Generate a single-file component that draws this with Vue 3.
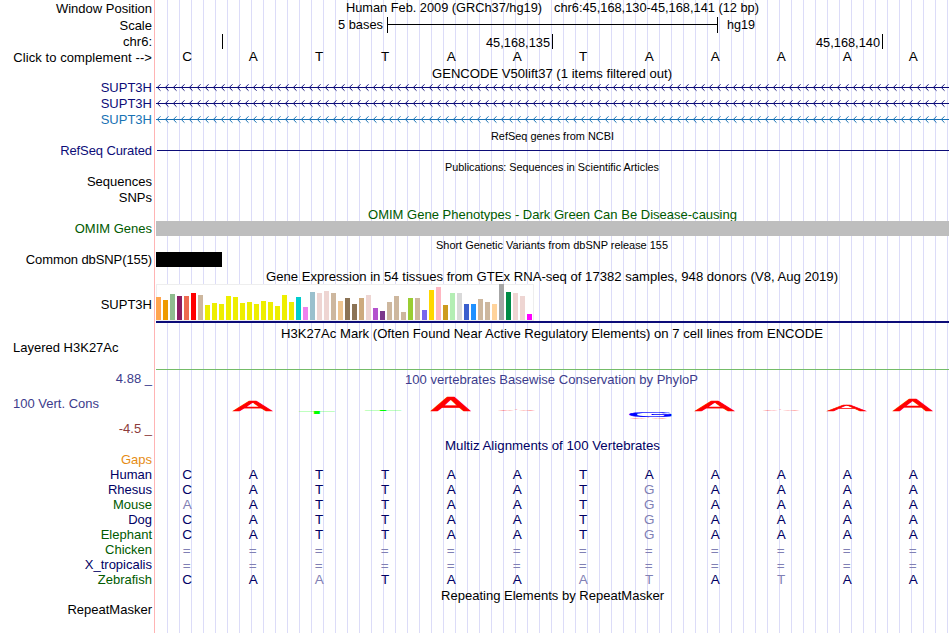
<template>
  <div class="browser">
    <div class="labels">
      <div v-for="g in labelGroups" :key="g.name" class="group" :class="g.name">
        <div v-for="l in g.items" :key="l.text" class="label" :class="l.cls">{{ l.text }}</div>
      </div>
    </div>

    <div class="tracks">
      <!-- position, scale and ruler -->
      <svg width="793" height="65" viewBox="156 0 793 65">
        <text x="346" y="12" textLength="196" lengthAdjust="spacingAndGlyphs">Human Feb. 2009 (GRCh37/hg19)</text>
        <text x="554" y="12" textLength="205" lengthAdjust="spacingAndGlyphs">chr6:45,168,130-45,168,141 (12 bp)</text>
        <text x="338" y="29" textLength="45" lengthAdjust="spacingAndGlyphs">5 bases</text>
        <path class="rule" d="M387.5 17V33M387 24.5H718M717.5 17V33" />
        <text x="727" y="29" textLength="28" lengthAdjust="spacingAndGlyphs">hg19</text>
        <path class="rule" d="M222.5 34V49M552.5 34V49M882.5 34V49" />
        <text x="486" y="47" textLength="64" lengthAdjust="spacingAndGlyphs">45,168,135</text>
        <text x="816" y="47" textLength="64" lengthAdjust="spacingAndGlyphs">45,168,140</text>
        <text v-for="(b, i) in 'CATTAATAAAAA'" :key="i" class="base" :x="colX(i)" y="61">{{ b }}</text>
      </svg>

      <!-- GENCODE -->
      <svg width="793" height="64" viewBox="156 0 793 64">
        <text x="432" y="13" textLength="240" lengthAdjust="spacingAndGlyphs">GENCODE V50lift37 (1 items filtered out)</text>
        <g v-for="(c, i) in ['#0c0c78', '#0c0c78', '#1872b4']" :key="i" :stroke="c" fill="none">
          <path :d="`M156 ${22.5 + i * 16}H949`" />
          <path :d="chevrons(22.5 + i * 16)" />
        </g>
      </svg>

      <!-- RefSeq and publications -->
      <svg width="793" height="78" viewBox="156 0 793 78">
        <text class="small" x="491" y="11" textLength="123" lengthAdjust="spacingAndGlyphs">RefSeq genes from NCBI</text>
        <path d="M157 21.5H949" stroke="#0c0c78" />
        <text class="small" x="445" y="42" textLength="214" lengthAdjust="spacingAndGlyphs">Publications: Sequences in Scientific Articles</text>
      </svg>

      <!-- OMIM and dbSNP -->
      <svg width="793" height="60" viewBox="156 0 793 60">
        <text class="green" x="368" y="12" textLength="369" lengthAdjust="spacingAndGlyphs">OMIM Gene Phenotypes - Dark Green Can Be Disease-causing</text>
        <rect x="156" y="14" width="793" height="15" fill="#bebebe" />
        <text class="small" x="436" y="42" textLength="232" lengthAdjust="spacingAndGlyphs">Short Genetic Variants from dbSNP release 155</text>
        <rect x="156" y="45" width="66" height="15" />
      </svg>

      <!-- GTEx expression -->
      <svg width="793" height="56" viewBox="156 0 793 56">
        <text x="266" y="14" textLength="572" lengthAdjust="spacingAndGlyphs">Gene Expression in 54 tissues from GTEx RNA-seq of 17382 samples, 948 donors (V8, Aug 2019)</text>
        <rect x="156.5" y="17.5" width="377" height="36" fill="#fff" stroke="#eee" />
        <rect v-for="(t, i) in tissues" :key="i" :x="156 + i * 7" :y="53 - t[1]" width="5" :height="t[1]" :fill="t[0]" />
        <rect x="156" y="54" width="793" height="2" fill="#0c0c78" />
      </svg>

      <!-- H3K27Ac -->
      <svg width="793" height="47" viewBox="156 0 793 47">
        <text x="281" y="15" textLength="542" lengthAdjust="spacingAndGlyphs">H3K27Ac Mark (Often Found Near Active Regulatory Elements) on 7 cell lines from ENCODE</text>
        <path d="M156 46.5H949" stroke="#74bc68" />
      </svg>

      <!-- PhyloP logo -->
      <svg width="793" height="68" viewBox="156 0 793 68">
        <text class="slate" x="405" y="14" textLength="293" lengthAdjust="spacingAndGlyphs">100 vertebrates Basewise Conservation by PhyloP</text>
        <text
          v-for="(l, i) in logo"
          :key="i"
          class="logo"
          :fill="l.color"
          :stroke="l.color"
          :stroke-width="l.h > 4 ? 3 : 0"
          :transform="`translate(${l.x} ${l.base}) scale(${l.w / l.em} ${l.h / 68.8})`"
        >{{ l.ch }}</text>
      </svg>

      <!-- Multiz alignment -->
      <svg width="793" height="149" viewBox="156 0 793 149">
        <text class="navy" x="445" y="12" textLength="215" lengthAdjust="spacingAndGlyphs">Multiz Alignments of 100 Vertebrates</text>
        <g v-for="(row, r) in alignment" :key="r">
          <text
            v-for="(b, i) in row"
            :key="i"
            class="base"
            :class="isMatch(b, i) ? 'navy' : 'faded'"
            :x="colX(i) - (b === '=' ? 0.5 : 0)"
            :y="(b === '=' ? 42 : 41) + r * 15"
          >{{ b }}</text>
        </g>
      </svg>

      <!-- RepeatMasker -->
      <svg width="793" height="46" viewBox="156 0 793 46">
        <text x="441" y="13" textLength="223" lengthAdjust="spacingAndGlyphs">Repeating Elements by RepeatMasker</text>
      </svg>
    </div>
  </div>
</template>

<script setup>
const labelGroups = [
  { name: 'position', items: [{ text: 'Window Position' }] },
  { name: 'ruler', items: [{ text: 'Scale' }, { text: 'chr6:' }, { text: 'Click to complement -->', cls: 'loose' }] },
  {
    name: 'gencode',
    items: [
      { text: 'SUPT3H', cls: 'gene' },
      { text: 'SUPT3H', cls: 'gene' },
      { text: 'SUPT3H', cls: 'noncoding' },
    ],
  },
  { name: 'refseq', items: [{ text: 'RefSeq Curated', cls: 'gene tight' }] },
  { name: 'pubs', items: [{ text: 'Sequences' }, { text: 'SNPs' }] },
  { name: 'omim', items: [{ text: 'OMIM Genes', cls: 'green' }] },
  { name: 'dbsnp', items: [{ text: 'Common dbSNP(155)', cls: 'tight' }] },
  { name: 'gtex', items: [{ text: 'SUPT3H' }] },
  { name: 'h3k', items: [{ text: 'Layered H3K27Ac', cls: 'left' }] },
  { name: 'max', items: [{ text: '4.88 _', cls: 'slate' }] },
  { name: 'cons', items: [{ text: '100 Vert. Cons', cls: 'left slate' }] },
  { name: 'min', items: [{ text: '-4.5 _', cls: 'maroon' }] },
  {
    name: 'species',
    items: [
      { text: 'Gaps', cls: 'orange' },
      { text: 'Human', cls: 'navy' },
      { text: 'Rhesus', cls: 'navy' },
      { text: 'Mouse', cls: 'green' },
      { text: 'Dog', cls: 'navy' },
      { text: 'Elephant', cls: 'green' },
      { text: 'Chicken', cls: 'green' },
      { text: 'X_tropicalis', cls: 'navy' },
      { text: 'Zebrafish', cls: 'green' },
    ],
  },
  { name: 'repeats', items: [{ text: 'RepeatMasker' }] },
]

// [colour, bar height]
const tissues = [
  ['#ffa54f', 23], ['#ee9a00', 20], ['#8fbc8f', 26], ['#8b1c62', 24], ['#ee6a50', 24], ['#ff0000', 27],
  ['#cdb79e', 25], ['#eeee00', 15], ['#eeee00', 17], ['#eeee00', 16], ['#eeee00', 24], ['#eeee00', 23],
  ['#eeee00', 17], ['#eeee00', 18], ['#eeee00', 16], ['#eeee00', 19], ['#eeee00', 18], ['#eeee00', 14],
  ['#eeee00', 25], ['#eeee00', 18], ['#00cdcd', 23], ['#ee82ee', 13], ['#9ac0cd', 28], ['#eed5d2', 27],
  ['#eed5d2', 29], ['#cdb79e', 27], ['#eec591', 19], ['#8b7355', 22], ['#8b7355', 16], ['#cdaa7d', 22],
  ['#eed5d2', 25], ['#b452cd', 12], ['#7a378b', 9], ['#cdb79e', 18], ['#cdb79e', 24], ['#cdb79e', 8],
  ['#9acd32', 22], ['#cdb79e', 22], ['#7a67ee', 10], ['#ffd700', 30], ['#ffb6c1', 33], ['#cd9b1d', 15],
  ['#b4eeb4', 27], ['#d9d9d9', 27], ['#3a5fcd', 16], ['#1e90ff', 16], ['#cdb79e', 21], ['#cdb79e', 18],
  ['#ffd39b', 16], ['#a6a6a6', 36], ['#008b45', 28], ['#eed5d2', 27], ['#eed5d2', 24], ['#ff00ff', 6],
]

// em is the advance of the glyph at 100px
const letterA = (x, h, base = 41) => ({ ch: 'A', x, base, w: 38.5, h, em: 66.7, color: '#ff0000' })
const logo = [
  letterA(233.5, 10.4),
  { ch: 'T', x: 297.5, base: 44, w: 39, h: 2, em: 61, color: '#00ff00' },
  { ch: 'T', x: 363.5, base: 41, w: 39, h: 1, em: 61, color: '#00ff00' },
  letterA(431.5, 14.4),
  letterA(497.5, 1.7),
  { ch: 'G', x: 627, base: 46.7, w: 48, h: 4.8, em: 77.8, color: '#0000ff' },
  letterA(629.5, 1.5, 48.8),
  letterA(695.5, 10.4),
  letterA(762, 0.8),
  letterA(827.5, 6.4),
  letterA(893.5, 11.4),
]

const human = 'CATTAATAAAAA'
const alignment = [
  human,
  'CATTAATGAAAA',
  'AATTAATGAAAA',
  'CATTAATGAAAA',
  'CATTAATGAAAA',
  '============',
  '============',
  'CAATAAATATAA',
]

const colX = (i) => 187.2 + i * 66
const isMatch = (b, i) => b === human[i]

const chevrons = (y) => {
  let d = ''
  for (let x = 157; x < 949; x += 8) {
    d += `M${x + 3.5} ${y - 3.2}L${x + 0.3} ${y}L${x + 3.5} ${y + 3.2}`
  }
  return d
}
</script>

<style>
body {
  margin: 0;
  background: #fff;
}
</style>

<style scoped>
.browser {
  display: flex;
  width: 950px;
  height: 633px;
  overflow: hidden;
  font-family: "Liberation Sans", Arial, sans-serif;
  font-size: 13px;
  color: #000;
}

.labels {
  width: 154px;
  flex: none;
  box-sizing: border-box;
  padding: 1px 2px 0 13px;
}

.group {
  margin-top: 15px;
}
.group.position {
  margin-top: 0;
}
.group.ruler {
  margin-top: 1px;
}
.group.gencode {
  margin-top: 14px;
}
.group.gtex {
  margin-top: 29px;
}
.group.h3k {
  margin-top: 27px;
}
.group.cons,
.group.min {
  margin-top: 9px;
}

.label {
  height: 16px;
  line-height: 15px;
  text-align: right;
  white-space: nowrap;
}
.species .label {
  height: 15px;
}
.label.left {
  text-align: left;
}
.label.loose {
  letter-spacing: 0.08px;
}
.label.tight {
  letter-spacing: -0.1px;
}

.tracks {
  width: 793px;
  flex: none;
  padding-left: 1px;
  border-left: 1px solid #ffb4b4;
  background: repeating-linear-gradient(to right, transparent 0 11px, #dcdcf8 11px 12px) content-box;
}
.tracks svg {
  display: block;
  font-size: 13.2px;
}

.tracks .base {
  font-size: 13.5px;
  text-anchor: middle;
}
.tracks .small {
  font-size: 11.2px;
}
.rule {
  stroke: #000;
  fill: none;
}
.tracks .logo {
  font-size: 100px;
}

.gene {
  color: #0c0c78;
}
.noncoding {
  color: #1872b4;
}
.navy {
  color: #000064;
  fill: #000064;
}
.green {
  color: #005a00;
  fill: #005a00;
}
.slate {
  color: #3c3c8c;
  fill: #3c3c8c;
}
.maroon {
  color: #8c3c3c;
}
.orange {
  color: #e68c14;
}
.faded {
  fill: #8080b4;
}
</style>
